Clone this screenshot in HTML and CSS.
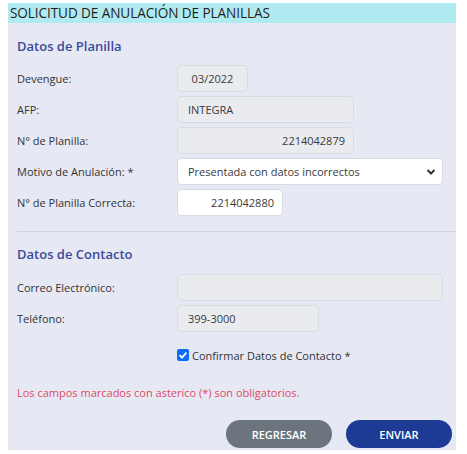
FILE: index.html
```html
<!DOCTYPE html>
<html lang="es">
<head>
<meta charset="utf-8">
<title>Solicitud de Anulación de Planillas</title>
<link rel="stylesheet" href="styles.css">
</head>
<body>
<div class="panel">
  <div class="panel-title">SOLICITUD DE ANULACIÓN DE PLANILLAS</div>
  <div class="panel-body">
    <h2 class="section-title">Datos de Planilla</h2>
    <div class="form">
      <label class="lbl">Devengue:</label>
      <div class="field"><div class="input disabled w-devengue center">03/2022</div></div>
      <label class="lbl">AFP:</label>
      <div class="field"><div class="input disabled w-mid">INTEGRA</div></div>
      <label class="lbl">N° de Planilla:</label>
      <div class="field"><div class="input disabled w-mid right">2214042879</div></div>
      <label class="lbl">Motivo de Anulación: *</label>
      <div class="field"><div class="input select w-full">Presentada con datos incorrectos
        <svg class="chev" viewBox="0 0 10 8" width="10" height="8"><path d="M1.5 2 L5 5.5 L8.5 2" fill="none" stroke="#333" stroke-width="2"/></svg></div></div>
      <label class="lbl">N° de Planilla Correcta:</label>
      <div class="field"><div class="input w-small right">2214042880</div></div>
    </div>
    <hr class="divider">
    <h2 class="section-title contact">Datos de Contacto</h2>
    <div class="form">
      <label class="lbl">Correo Electrónico:</label>
      <div class="field"><div class="input disabled w-full"></div></div>
      <label class="lbl">Teléfono:</label>
      <div class="field"><div class="input disabled w-phone">399-3000</div></div>
    </div>
    <div class="check-row">
      <span class="checkbox"><svg viewBox="0 0 12 12" width="12" height="12"><path d="M2.6 6.2 L5 8.6 L9.4 3.6" fill="none" stroke="#fff" stroke-width="1.8"/></svg></span>
      <span class="check-label">Confirmar Datos de Contacto *</span>
    </div>
    <p class="note">Los campos marcados con asterico (*) son obligatorios.</p>
    <div class="actions">
      <button class="btn btn-gray">REGRESAR</button>
      <button class="btn btn-blue">ENVIAR</button>
    </div>
  </div>
</div>
</body>
</html>
```
FILE: styles.css
```css
* { box-sizing: border-box; }
body {
  margin: 0;
  padding: 3px 11px 0 8px;
  background: #ffffff;
  font-family: "Open Sans", "Noto Sans", sans-serif;
  color: #333;
}
.panel {
  width: 448px;
  background: #e6e9f4;
  height: 447px;
}
.panel-title {
  height: 20px;
  background: #b0eaf1;
  color: #1e1e1e;
  font-size: 13.6px;
  line-height: 20px;
  padding-left: 2px;
  letter-spacing: -0.1px;
}
.panel-body {
  padding: 0 0 0 9px;
}
.section-title {
  margin: 0;
  font-size: 13px;
  font-weight: 600;
  color: #3c4a9b;
  line-height: 20px;
  padding-top: 13px;
  padding-bottom: 9px;
}
.section-title.contact {
  padding-top: 12px;
  padding-bottom: 10px;
}
.form {
  display: grid;
  grid-template-columns: 160px 1fr;
  row-gap: 4px;
  align-items: center;
}
.lbl {
  font-size: 11px;
  color: #333;
}
.field { display: flex; }
.input {
  height: 27px;
  border: 1px solid #d8dbe2;
  border-radius: 4px;
  background: #fff;
  font-size: 11px;
  color: #3a3a3a;
  line-height: 25px;
  padding: 0 8px 0 10px;
  position: relative;
}
.input.disabled { background: #e9ebef; }
.center { text-align: center; padding: 0; }
.right { text-align: right; }
.w-devengue { width: 71px; }
.w-mid { width: 177px; }
.w-full { width: 266px; }
.w-small { width: 106px; }
.w-phone { width: 142px; }
.select { padding-right: 30px; }
.chev {
  position: absolute;
  right: 6px;
  top: 9px;
}
.divider {
  margin: 15px 0 0 0;
  border: 0;
  border-top: 1px solid #d0d4e2;
}
.check-row {
  display: flex;
  align-items: center;
  margin: 16px 0 0 160px;
  gap: 3px;
  height: 14px;
}
.checkbox {
  width: 12px;
  height: 12px;
  border-radius: 2px;
  background: #0d6efd;
  display: inline-flex;
}
.check-label { font-size: 11px; color: #333; }
.note {
  margin: 23px 0 0 0;
  font-size: 11px;
  color: #e04a5f;
  line-height: 16px;
}
.actions {
  display: flex;
  justify-content: flex-end;
  gap: 14px;
  margin-top: 19px;
  padding-right: 4px;
}
.btn {
  width: 106px;
  height: 28px;
  border: 0;
  border-radius: 14px;
  color: #fff;
  font-family: "Open Sans", "Noto Sans", sans-serif;
  font-size: 11px;
  font-weight: 600;
}
.btn-gray { background: #6c757d; }
.btn-blue { background: #1d3a94; }
```
